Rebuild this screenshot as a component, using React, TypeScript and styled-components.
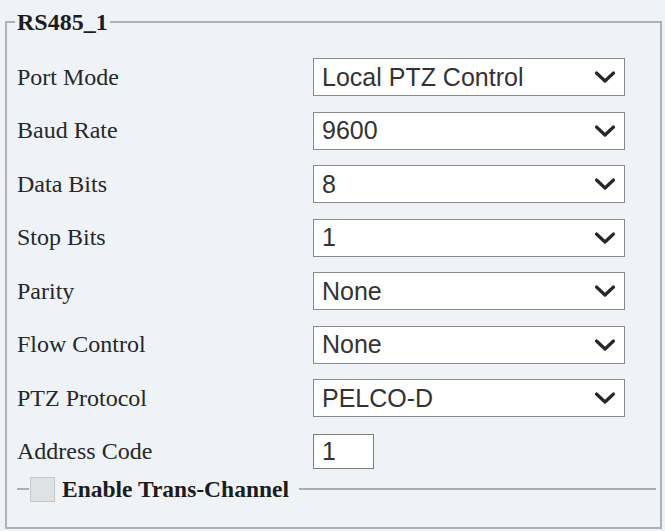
import { FC, Fragment } from "react";
import styled, { createGlobalStyle } from "styled-components";

const GlobalStyle = createGlobalStyle`
  html, body {
    margin: 0;
    padding: 0;
    background: #eff3f7;
  }
  * {
    box-sizing: border-box;
  }
`;

const Page = styled.div`
  width: 665px;
  height: 531px;
  padding: 8px 4px 0 5px;
  overflow: hidden;
`;

const Group = styled.fieldset`
  margin: 0;
  width: 657px;
  height: 521px;
  padding: 22px 10px 0 10px;
  border: 2px solid #aeb2b6;
  min-width: 0;
`;

const Title = styled.legend`
  margin-left: -2px;
  padding: 0 2px;
  font-family: "Liberation Serif", "Times New Roman", serif;
  font-weight: bold;
  font-size: 24px;
  line-height: 28px;
  color: #1c1c1c;
`;

const Form = styled.div`
  display: grid;
  grid-template-columns: 296px 312px;
  grid-auto-rows: 38px;
  row-gap: 15.5px;
  align-items: center;
`;

const Label = styled.div`
  font-family: "Liberation Serif", "Times New Roman", serif;
  font-size: 24px;
  color: #272727;
  white-space: nowrap;
`;

const SelectBox = styled.div`
  display: flex;
  align-items: center;
  justify-content: space-between;
  height: 38px;
  padding: 0 8px 0 8px;
  background: #ffffff;
  border: 1.5px solid #8a8a8a;
  font-family: "Liberation Sans", Arial, sans-serif;
  font-size: 25px;
  color: #333333;
`;

const Chevron = styled.svg`
  width: 22px;
  height: 14px;
  flex: none;
`;

const TextBox = styled.div<{ $width: number }>`
  width: ${(p) => p.$width}px;
  height: 35px;
  display: flex;
  align-items: center;
  padding-left: 8px;
  background: #ffffff;
  border: 1.5px solid #7c7c7c;
  font-family: "Liberation Sans", Arial, sans-serif;
  font-size: 25px;
  color: #333333;
`;

const SubGroup = styled.div`
  display: flex;
  align-items: center;
  height: 27px;
  margin-top: 5px;
  margin-right: -6px;
`;

const Rule = styled.div<{ $grow?: boolean }>`
  height: 2px;
  background: #a9adb1;
  width: 12px;
  flex: ${(p) => (p.$grow ? "1" : "none")};
`;

const Check = styled.div`
  width: 25px;
  height: 25px;
  margin-left: 1px;
  background: #dfe1e3;
  border: 1.5px solid #c6c9cc;
  flex: none;
`;

const SubTitle = styled.span`
  margin: 0 10px 0 7px;
  font-family: "Liberation Serif", "Times New Roman", serif;
  font-weight: bold;
  font-size: 23.5px;
  color: #1c1c1c;
  white-space: nowrap;
`;

const Select: FC<{ value: string }> = ({ value }) => (
  <SelectBox>
    <span>{value}</span>
    <Chevron viewBox="0 0 22 14">
      <polyline
        points="2.5,3 11,11 19.5,3"
        fill="none"
        stroke="#262626"
        strokeWidth="3.2"
        strokeLinecap="round"
        strokeLinejoin="round"
      />
    </Chevron>
  </SelectBox>
);

const fields = [
  { label: "Port Mode", value: "Local PTZ Control" },
  { label: "Baud Rate", value: "9600" },
  { label: "Data Bits", value: "8" },
  { label: "Stop Bits", value: "1" },
  { label: "Parity", value: "None" },
  { label: "Flow Control", value: "None" },
  { label: "PTZ Protocol", value: "PELCO-D" },
];

export default function App() {
  return (
    <>
      <GlobalStyle />
      <Page>
        <Group>
          <Title>RS485_1</Title>
          <Form>
            {fields.map((f) => (
              <Fragment key={f.label}>
                <Label>{f.label}</Label>
                <Select value={f.value} />
              </Fragment>
            ))}
            <Label>Address Code</Label>
            <TextBox $width={61}>1</TextBox>
          </Form>
          <SubGroup>
            <Rule />
            <Check />
            <SubTitle>Enable Trans-Channel</SubTitle>
            <Rule $grow />
          </SubGroup>
        </Group>
      </Page>
    </>
  );
}
